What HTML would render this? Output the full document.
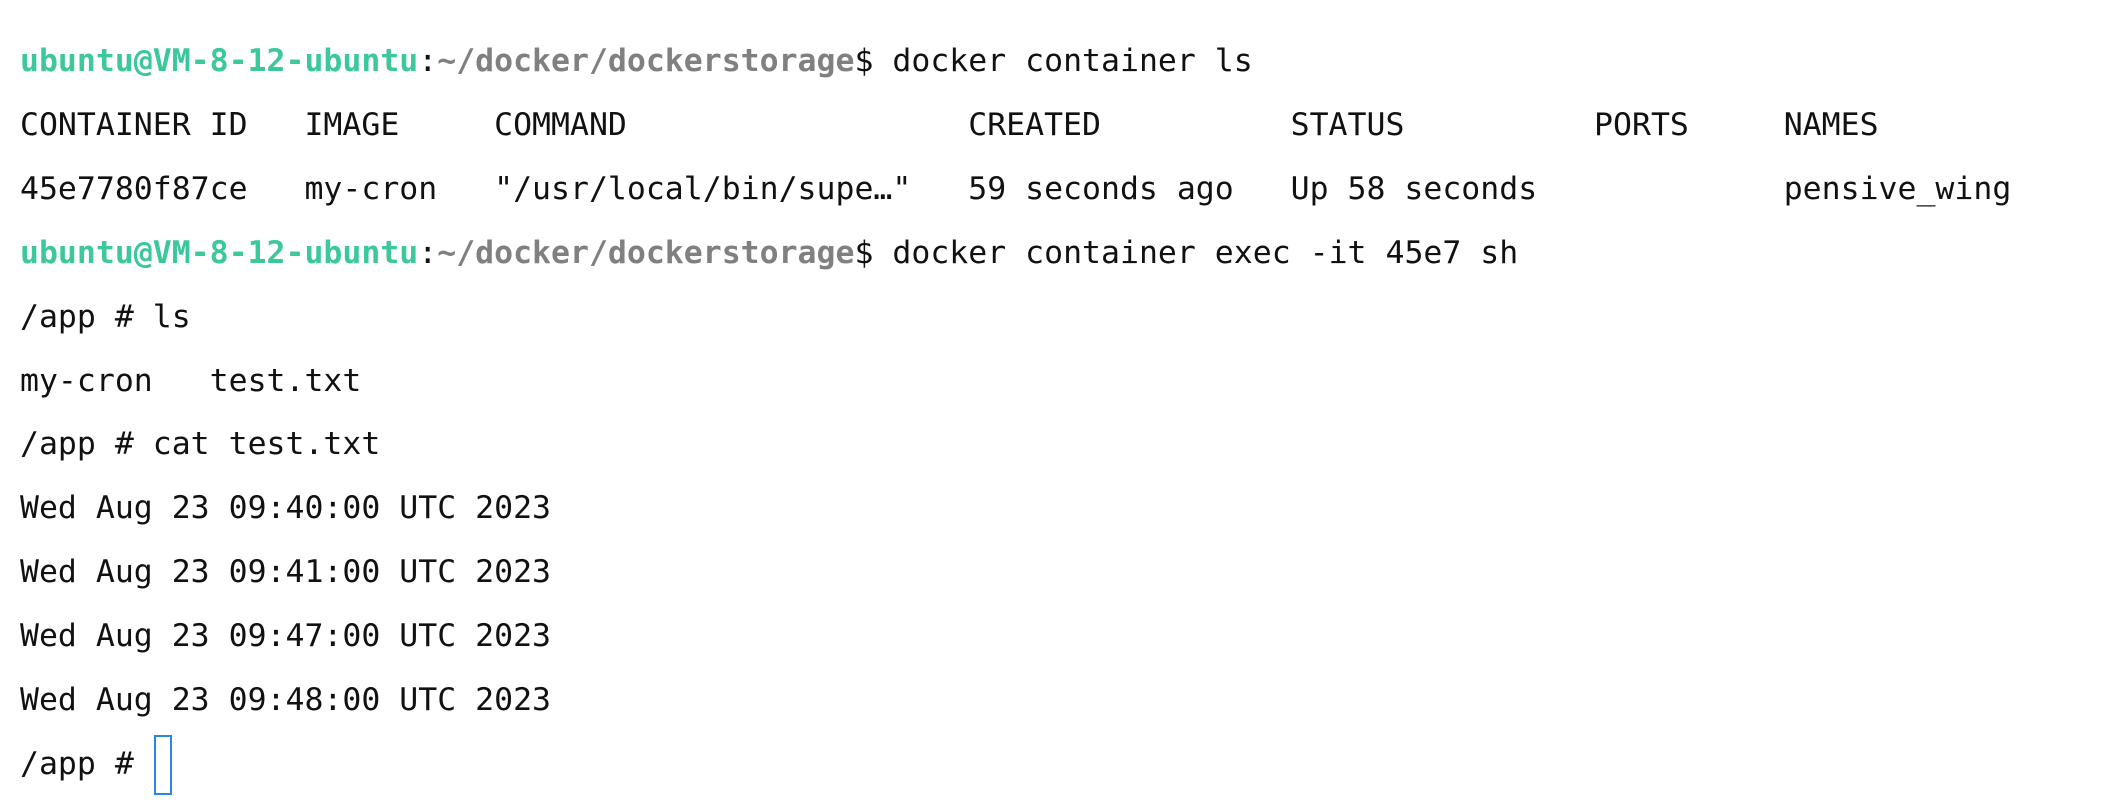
<!DOCTYPE html>
<html><head><meta charset="utf-8"><style>
html,body{margin:0;padding:0;background:#fff;width:2102px;height:808px;overflow:hidden}
pre{margin:0;position:absolute;left:20px;top:30px;font-family:"DejaVu Sans Mono","Liberation Mono",monospace;font-size:31.5px;line-height:63.9px;color:#111}
.g{color:#3dc79d;font-weight:bold}
.p{color:#808080;font-weight:bold}
.c{display:inline-block;width:18px;height:60px;border:2px solid #2a86e8;vertical-align:middle;box-sizing:border-box;margin-left:1px}
</style></head><body><pre><span class="g">ubuntu@VM-8-12-ubuntu</span>:<span class="p">~/docker/dockerstorage</span>$ docker container ls
CONTAINER ID   IMAGE     COMMAND                  CREATED          STATUS          PORTS     NAMES
45e7780f87ce   my-cron   "/usr/local/bin/supe…"   59 seconds ago   Up 58 seconds             pensive_wing
<span class="g">ubuntu@VM-8-12-ubuntu</span>:<span class="p">~/docker/dockerstorage</span>$ docker container exec -it 45e7 sh
/app # ls
my-cron   test.txt
/app # cat test.txt
Wed Aug 23 09:40:00 UTC 2023
Wed Aug 23 09:41:00 UTC 2023
Wed Aug 23 09:47:00 UTC 2023
Wed Aug 23 09:48:00 UTC 2023
/app # <span class="c"></span></pre></body></html>
